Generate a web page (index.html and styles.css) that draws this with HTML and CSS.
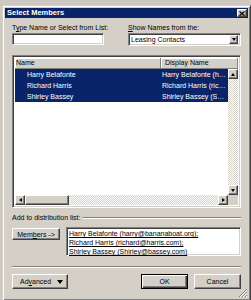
FILE: index.html
```html
<!DOCTYPE html>
<html>
<head>
<meta charset="utf-8">
<link rel="stylesheet" href="styles.css">
</head>
<body>
<div class="dialog">
  <div class="titlebar">
    <span class="title">Select Members</span>
    <span class="close-btn raised"><svg width="6" height="5" viewBox="0 0 6 5"><path d="M0.5 0.5L5.5 4.5M5.5 0.5L0.5 4.5" stroke="#000" stroke-width="1.2"/></svg></span>
  </div>
  <div class="main">
    <div class="top-grid">
      <div class="lbl">T<u>y</u>pe Name or Select from List:</div>
      <div class="lbl"><u>S</u>how Names from the:</div>
      <div class="field sunken"></div>
      <div class="combo sunken">
        <span class="combo-text">Leasing Contacts</span>
        <span class="combo-btn raised"><i class="tri-down"></i></span>
      </div>
    </div>

    <div class="list sunken">
      <div class="list-head">
        <div class="hcell name-col">Name</div>
        <div class="hcell disp-col">Display Name</div>
      </div>
      <div class="list-body">
        <div class="rows">
          <div class="row sel"><span class="c-name">Harry Belafonte</span><span class="c-disp">Harry Belafonte (harry@bananaboat.org)</span></div>
          <div class="row sel"><span class="c-name">Richard Harris</span><span class="c-disp">Richard Harris (richard@harris.com)</span></div>
          <div class="row sel"><span class="c-name">Shirley Bassey</span><span class="c-disp">Shirley Bassey (Shirley@bassey.com)</span></div>
        </div>
        <div class="vscroll">
          <span class="sbtn raised"><i class="tri-up"></i></span>
          <span class="track"></span>
          <span class="sbtn raised"><i class="tri-down"></i></span>
        </div>
      </div>
      <div class="hscroll-row">
        <div class="hscroll">
          <span class="sbtn raised"><i class="tri-left"></i></span>
          <span class="thumb raised"></span>
          <span class="track"></span>
          <span class="sbtn raised"><i class="tri-right"></i></span>
        </div>
        <div class="corner"></div>
      </div>
    </div>

    <div class="add-row">
      <span class="lbl">Add to distribution list:</span>
      <span class="etched grow"></span>
    </div>

    <div class="members-row">
      <span class="btn raised members-btn">Mem<u>b</u>ers -&gt;</span>
      <div class="members-box sunken">
        <div class="m-line">Harry Belafonte (harry@bananaboat.org);</div>
        <div class="m-line">Richard Harris (richard@harris.com);</div>
        <div class="m-line">Shirley Bassey (Shirley@bassey.com)</div>
      </div>
    </div>

    <div class="etched sep"></div>

    <div class="button-row">
      <span class="btn raised adv-btn"><span>Ad<u>v</u>anced</span><i class="tri-down big"></i></span>
      <span class="spacer"></span>
      <span class="btn default-btn">OK</span>
      <span class="btn raised">Cancel</span>
    </div>
  </div>
  <svg class="grip" width="8" height="8" viewBox="0 0 8 8">
    <path d="M8 0L0 8M8 3L3 8M8 6L6 8" stroke="#808080" stroke-width="1"/>
    <path d="M8 1L1 8M8 4L4 8M8 7L7 8" stroke="#ffffff" stroke-width="1"/>
  </svg>
</div>
</body>
</html>
```

FILE: styles.css
```css
* { box-sizing: border-box; }
html, body { margin: 0; padding: 0; }
body {
  background: #cdc9c1;
  padding: 5px 0 0 2px;
  font-family: "Liberation Sans", Arial, sans-serif;
  font-size: 7px;
  color: #000;
  overflow: hidden;
}
u { text-decoration: underline; }

.dialog {
  position: relative;
  width: 249px;
  height: 296px;
  background: #d4d0c8;
  border: 1px solid;
  border-color: #d4d0c8 #404040 #404040 #d4d0c8;
  box-shadow: inset 1px 1px #fff, inset -1px -1px #808080;
  padding: 2px;
}

.titlebar {
  height: 10px;
  background: #0a246a;
  display: flex;
  align-items: center;
  justify-content: space-between;
  padding: 0 1px 0 2px;
}
.title {
  color: #fff;
  font-weight: bold;
  font-size: 7.5px;
  line-height: 10px;
}
.close-btn {
  width: 10px;
  height: 8px;
  display: flex;
  align-items: center;
  justify-content: center;
}

.raised {
  background: #d4d0c8;
  border: 1px solid;
  border-color: #fff #404040 #404040 #fff;
  box-shadow: inset -1px -1px #808080;
}
.sunken {
  background: #fff;
  border: 1px solid;
  border-color: #808080 #fff #fff #808080;
  box-shadow: inset 1px 1px #404040, inset -1px -1px #d4d0c8;
}

.main {
  padding: 5px 7px 0 7px;
}

.lbl { line-height: 9px; white-space: nowrap; }

.top-grid {
  display: grid;
  grid-template-columns: 92px 1fr;
  column-gap: 24px;
  row-gap: 1px;
  align-items: start;
}
.field { height: 12px; }
.combo {
  height: 13px;
  display: flex;
  align-items: center;
  padding: 2px;
}
.combo-text { flex: 1; padding-left: 0; line-height: 9px; }
.combo-btn {
  width: 9px;
  height: 9px;
  display: flex;
  align-items: center;
  justify-content: center;
}

.tri-down, .tri-up, .tri-left, .tri-right { display: block; width: 0; height: 0; }
.tri-down { border-left: 2.5px solid transparent; border-right: 2.5px solid transparent; border-top: 3px solid #000; }
.tri-down.big { border-left-width: 3.5px; border-right-width: 3.5px; border-top-width: 4px; }
.tri-up { border-left: 2.5px solid transparent; border-right: 2.5px solid transparent; border-bottom: 3px solid #000; }
.tri-left { border-top: 2.5px solid transparent; border-bottom: 2.5px solid transparent; border-right: 3px solid #000; }
.tri-right { border-top: 2.5px solid transparent; border-bottom: 2.5px solid transparent; border-left: 3px solid #000; }

.list {
  margin-top: 9px;
  height: 153px;
  padding: 2px;
  display: flex;
  flex-direction: column;
}
.list-head {
  display: flex;
  height: 11px;
  flex: none;
}
.hcell {
  background: #d4d0c8;
  border-right: 1px solid #808080;
  border-bottom: 1px solid #808080;
  box-shadow: inset 1px 1px #fff;
  line-height: 10px;
  white-space: nowrap;
}
.name-col { width: 146px; padding-left: 1px; }
.disp-col { flex: 1; padding-left: 4px; }

.list-body {
  flex: 1;
  display: flex;
  min-height: 0;
}
.rows { flex: 1; min-width: 0; }
.row {
  display: flex;
  height: 11px;
  line-height: 11px;
  white-space: nowrap;
}
.row.sel { background: #0a246a; color: #fff; }
.c-name { width: 146px; padding-left: 12px; flex: none; }
.c-disp {
  flex: 1;
  min-width: 0;
  overflow: hidden;
  text-overflow: ellipsis;
  padding-left: 1px;
}

.vscroll {
  width: 10px;
  display: flex;
  flex-direction: column;
}
.sbtn {
  width: 10px;
  height: 10px;
  flex: none;
  display: flex;
  align-items: center;
  justify-content: center;
}
.track {
  flex: 1;
  background-color: #fff;
  background-image: repeating-conic-gradient(#d4d0c8 0 25%, #fff 0 50%);
  background-size: 2px 2px;
}
.hscroll-row {
  display: flex;
  height: 10px;
  flex: none;
}
.hscroll { flex: 1; display: flex; }
.thumb { width: 44px; flex: none; }
.corner { width: 10px; background: #d4d0c8; }

.add-row {
  margin-top: 5px;
  display: flex;
  align-items: center;
}
.etched {
  height: 2px;
  border-top: 1px solid #808080;
  border-bottom: 1px solid #fff;
}
.grow { flex: 1; margin-left: 3px; }

.members-row {
  margin-top: 5px;
  display: flex;
  align-items: flex-start;
  gap: 6px;
}
.btn {
  display: flex;
  align-items: center;
  justify-content: center;
  white-space: nowrap;
  line-height: 9px;
}
.members-btn {
  width: 48px;
  height: 12px;
  margin-top: 1px;
}
.members-box {
  flex: 1;
  height: 29px;
  padding: 1px 2px;
}
.m-line {
  line-height: 9px;
  text-decoration: underline;
  white-space: nowrap;
}

.sep { margin-top: 10px; }

.button-row {
  margin-top: 6px;
  display: flex;
  align-items: center;
  gap: 6px;
}
.button-row .btn { width: 47px; height: 15px; }
.button-row .adv-btn {
  width: 56px;
  justify-content: space-between;
  padding: 0 4px 0 7px;
}
.spacer { flex: 1; }
.default-btn {
  background: #d4d0c8;
  border: 1px solid #000;
  box-shadow: inset 1px 1px #fff, inset -1px -1px #404040, inset -2px -2px #808080;
}

.grip {
  position: absolute;
  right: 3px;
  bottom: 3px;
}
```
